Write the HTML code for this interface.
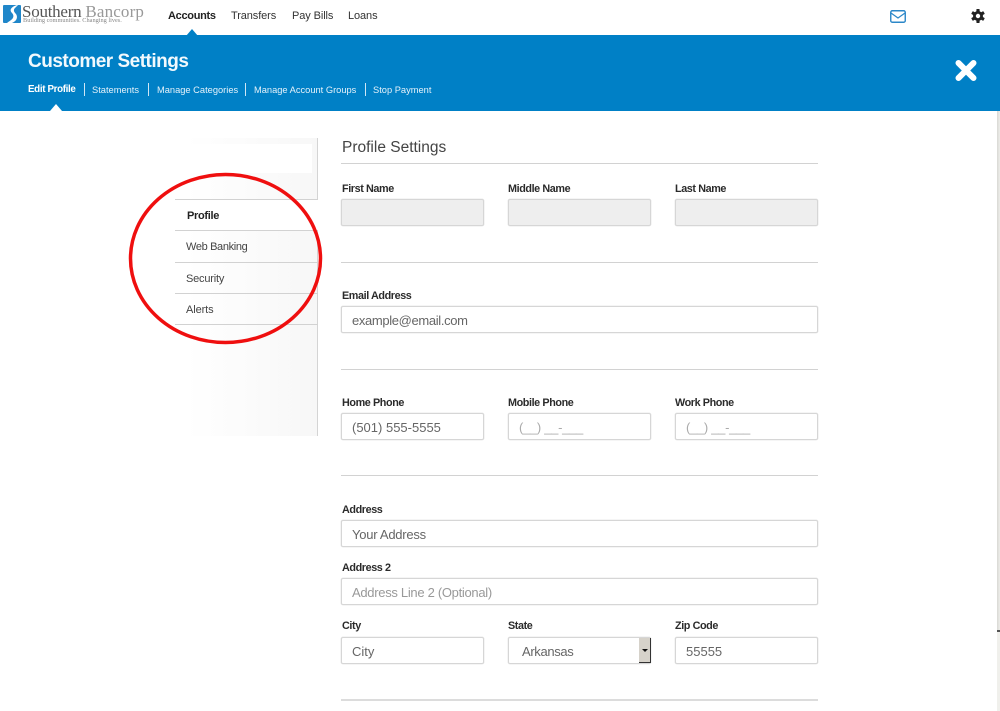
<!DOCTYPE html>
<html><head><meta charset="utf-8"><style>
html,body{margin:0;padding:0;background:#fff}
body{width:1000px;height:711px;position:relative;overflow:hidden;font-family:"Liberation Sans",sans-serif}
.t{position:absolute;white-space:nowrap;line-height:16px}
.l{font-size:10.8px;font-weight:bold;color:#2b2b2b;letter-spacing:-.4px}
.i{position:absolute;box-sizing:border-box;height:27px;background:#fff;border:1px solid #d6d6d6;border-radius:2px;box-shadow:0 0 0 .5px #ebebeb;font-size:13px;color:#666;line-height:27px;padding-left:10px;white-space:nowrap}
.d{background:#eee;border-color:#d6d6d6}
.h{position:absolute;left:341px;width:477px;height:1px;background:#d2d2d2}
.n{font-size:11px;color:#333;letter-spacing:-.1px}
.s{font-size:9.3px;color:#e4f1fa;top:82px}
.b{position:absolute;top:83px;width:1px;height:13px;background:#cfe6f5}
.m{font-size:11px;color:#444;letter-spacing:-.1px}
.r{position:absolute;left:175px;width:143px;height:1px;background:#d2d2d2}
</style></head><body>
<!-- header logo -->
<svg style="position:absolute;left:3px;top:5px" width="18" height="18" viewBox="0 0 18 18"><rect width="18" height="18" fill="#1f86c9" rx="1"/><path d="M14 0C8 2 6 5 9 8c2 2 2 5-1 7-1 1-3 2-4 3h5c5-2 6-6 4-9-2-2-3-4-1-6l3-3z" fill="#fff"/></svg>
<div class="t" style="left:22px;top:3px;font:17px/18px 'Liberation Serif',serif;color:#555;letter-spacing:-.25px">Southern <span style="color:#999;letter-spacing:.15px">Bancorp</span></div>
<div class="t" style="left:23px;top:17px;font:6.3px/8px 'Liberation Serif',serif;color:#888">Building communities. Changing lives.</div>
<div class="t n" style="left:168px;top:8px;font-weight:bold;color:#222;letter-spacing:-.3px">Accounts</div>
<div class="t n" style="left:231px;top:8px">Transfers</div>
<div class="t n" style="left:292px;top:8px">Pay Bills</div>
<div class="t n" style="left:348px;top:8px">Loans</div>
<svg style="position:absolute;left:890px;top:10px" width="16" height="13" viewBox="0 0 16 13"><rect x=".75" y=".75" width="14.5" height="11.5" rx="1.5" fill="#fff" stroke="#2b87c8" stroke-width="1.4"/><path d="M1 3l7 5 7-5" fill="none" stroke="#2b87c8" stroke-width="1.2"/></svg>
<svg style="position:absolute;left:971px;top:9px" width="14" height="14" viewBox="0 0 14 14"><g fill="#222"><circle cx="7" cy="7" r="5"/><rect x="5.4" y="0" width="3.2" height="14" rx=".6"/><rect x="5.4" y="0" width="3.2" height="14" rx=".6" transform="rotate(60 7 7)"/><rect x="5.4" y="0" width="3.2" height="14" rx=".6" transform="rotate(120 7 7)"/></g><circle cx="7" cy="7" r="2.2" fill="#fff"/></svg>
<!-- blue band -->
<div style="position:absolute;left:0;top:35px;width:1000px;height:76px;background:#0080c6"></div>
<svg style="position:absolute;left:184px;top:29px" width="16" height="7" viewBox="0 0 16 7"><path d="M2 7L8 0l6 7z" fill="#0080c6"/></svg>
<svg style="position:absolute;left:48px;top:104px" width="16" height="7" viewBox="0 0 16 7"><path d="M2 7L8 0l6 7z" fill="#fff"/></svg>
<div class="t" style="left:28px;top:51px;font-size:19px;line-height:22px;font-weight:bold;color:#f2f9fd;letter-spacing:-.5px">Customer Settings</div>
<div class="t s" style="left:28px;top:82px;font-size:9.8px;font-weight:bold;color:#fff;letter-spacing:-.35px">Edit Profile</div><div class="b" style="left:84px"></div>
<div class="t s" style="left:92px">Statements</div><div class="b" style="left:148px"></div>
<div class="t s" style="left:157px">Manage Categories</div><div class="b" style="left:245px"></div>
<div class="t s" style="left:254px">Manage Account Groups</div><div class="b" style="left:365px"></div>
<div class="t s" style="left:373px">Stop Payment</div>
<svg style="position:absolute;left:954px;top:59px" width="24" height="23" viewBox="0 0 24 23"><path d="M4.500 4L19.500 19M19.500 4L4.500 19" stroke="#fff" stroke-width="6" stroke-linecap="round"/></svg>
<!-- scrollbar edge -->
<div style="position:absolute;left:997px;top:111px;width:3px;height:520px;background:linear-gradient(90deg,#d8d8d4,#eeeeea)"></div>
<div style="position:absolute;left:997px;top:630px;width:3px;height:2px;background:#555"></div>
<div style="position:absolute;left:997px;top:632px;width:3px;height:79px;background:#f0f0ec"></div>
<!-- sidebar -->
<div style="position:absolute;left:186px;top:138px;width:131px;height:298px;background:linear-gradient(90deg,#fff,#f7f7f7);border-right:1px solid #d4d4d4"></div>
<div style="position:absolute;left:186px;top:144px;width:126px;height:29px;background:#fff"></div>
<div style="position:absolute;left:175px;top:200px;width:143px;height:31px;background:#fff"></div>
<div class="r" style="top:199px"></div>
<div class="r" style="top:230px"></div><div class="r" style="top:262px"></div><div class="r" style="top:293px"></div><div class="r" style="top:324px"></div>
<div class="t m" style="left:187px;top:208px;font-weight:bold;color:#222;letter-spacing:-.3px">Profile</div>
<div class="t m" style="left:186px;top:239px;letter-spacing:-.35px">Web Banking</div>
<div class="t m" style="left:186px;top:271px;letter-spacing:-.2px">Security</div>
<div class="t m" style="left:186px;top:302px">Alerts</div>
<!-- red ellipse -->
<svg style="position:absolute;left:125px;top:170px" width="202" height="178" viewBox="0 0 202 178"><ellipse cx="100.500" cy="88.500" rx="95" ry="84" fill="none" stroke="#ef0f0f" stroke-width="3.500"/></svg>
<!-- form -->
<div class="t" style="left:342px;top:138px;font-size:15.500px;line-height:20px;color:#444">Profile Settings</div>
<div class="h" style="top:163px"></div>
<div class="t l" style="left:342px;top:181px">First Name</div>
<div class="t l" style="left:508px;top:181px">Middle Name</div>
<div class="t l" style="left:675px;top:181px">Last Name</div>
<div class="i d" style="left:341px;top:199px;width:143px"></div>
<div class="i d" style="left:508px;top:199px;width:143px"></div>
<div class="i d" style="left:675px;top:199px;width:143px"></div>
<div class="h" style="top:262px"></div>
<div class="t l" style="left:342px;top:288px">Email Address</div>
<div class="i" style="left:341px;top:306px;width:477px;letter-spacing:-.35px">example@email.com</div>
<div class="h" style="top:369px"></div>
<div class="t l" style="left:342px;top:395px">Home Phone</div>
<div class="t l" style="left:508px;top:395px">Mobile Phone</div>
<div class="t l" style="left:675px;top:395px">Work Phone</div>
<div class="i" style="left:341px;top:413px;width:143px">(501) 555-5555</div>
<div class="i" style="left:508px;top:413px;width:143px;color:#aaa;letter-spacing:-.3px">(__) __-___</div>
<div class="i" style="left:675px;top:413px;width:143px;color:#aaa;letter-spacing:-.3px">(__) __-___</div>
<div class="h" style="top:475px"></div>
<div class="t l" style="left:342px;top:502px">Address</div>
<div class="i" style="left:341px;top:520px;width:477px;letter-spacing:-.25px">Your Address</div>
<div class="t l" style="left:342px;top:560px">Address 2</div>
<div class="i" style="left:341px;top:578px;width:477px;color:#999;letter-spacing:-.3px">Address Line 2 (Optional)</div>
<div class="t l" style="left:342px;top:618px">City</div>
<div class="t l" style="left:508px;top:618px">State</div>
<div class="t l" style="left:675px;top:618px">Zip Code</div>
<div class="i" style="left:341px;top:637px;width:143px">City</div>
<div class="i" style="left:508px;top:637px;width:143px;padding-left:13px;letter-spacing:-.35px">Arkansas</div>
<div style="position:absolute;left:639px;top:638px;width:12px;height:25px;background:#d6d2ca;border-right:1.500px solid #333;border-bottom:1.500px solid #333;box-sizing:border-box"></div>
<div style="position:absolute;left:642px;top:649px;width:0;height:0;border-left:3px solid transparent;border-right:3px solid transparent;border-top:3px solid #111"></div>
<div class="i" style="left:675px;top:637px;width:143px">55555</div>
<div class="h" style="top:699px;height:1.500px;background:#dcdcdc"></div>
</body></html>
